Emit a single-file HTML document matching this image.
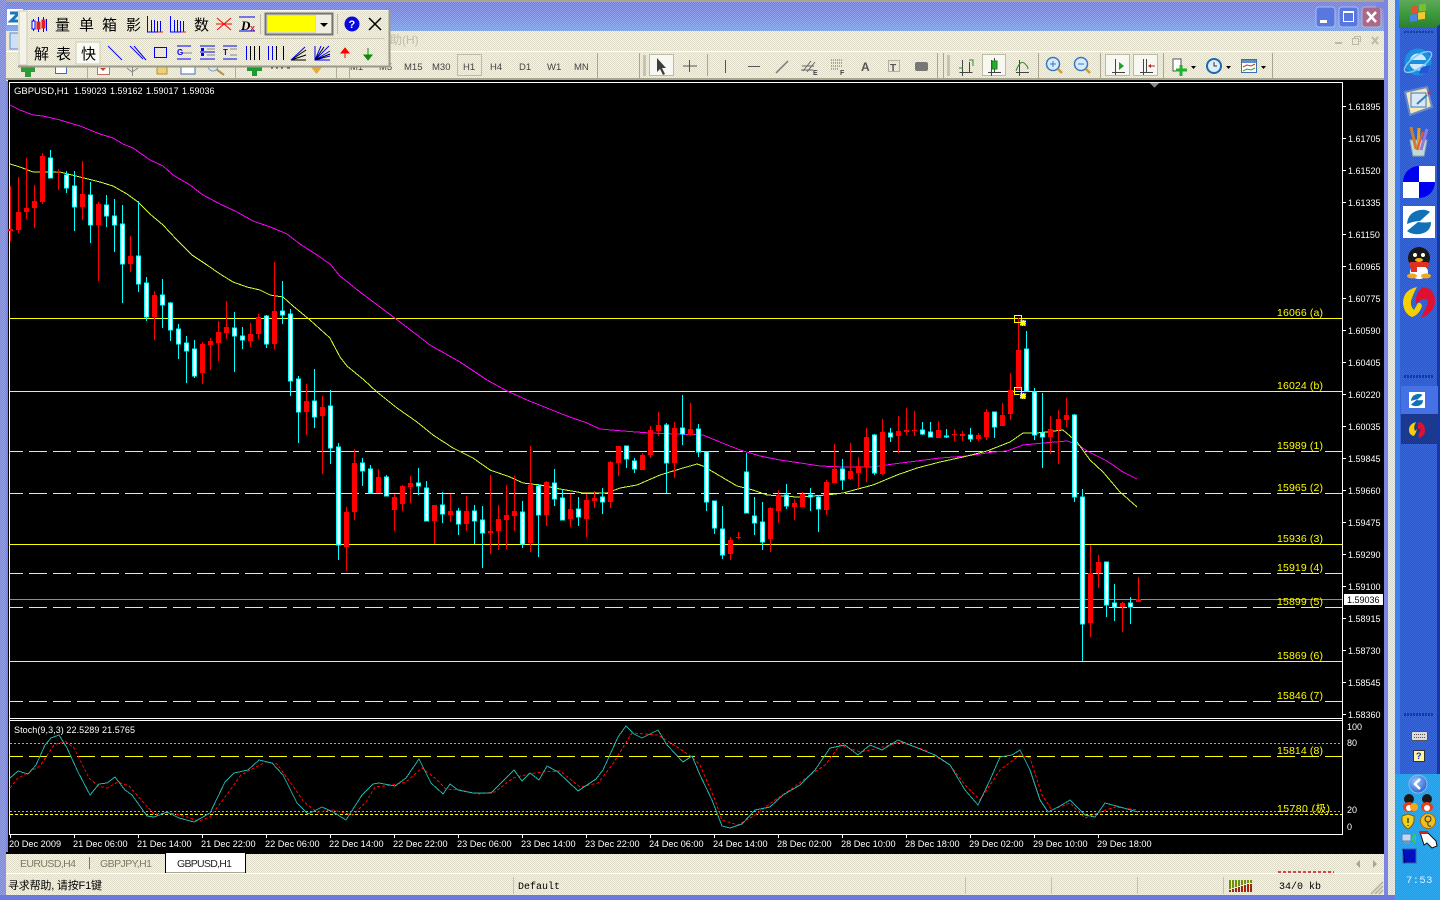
<!DOCTYPE html>
<html lang="zh"><head><meta charset="utf-8"><title>MetaTrader GBPUSD,H1</title>
<style>
html,body{margin:0;padding:0;background:#000;width:1440px;height:900px;overflow:hidden}
svg{display:block;position:absolute;left:0;top:0}
text{font-family:"Liberation Sans","Noto Sans CJK SC",sans-serif}
.ax{fill:#fff;font-size:9px}
.tm{fill:#fff;font-size:9.2px}
.fb{fill:#ff0;font-size:10.5px}
.cjk{font-family:"Liberation Sans","WenQuanYi Zen Hei","Noto Sans CJK SC",sans-serif;font-size:15px;fill:#000}
.tf{font-size:9.5px;fill:#444}
</style></head><body>
<svg width="1440" height="900" viewBox="0 0 1440 900" xmlns="http://www.w3.org/2000/svg">
<defs>
<pattern id="dl" width="2" height="2" patternUnits="userSpaceOnUse"><rect width="1" height="1" fill="#fff" opacity=".22"/><rect x="1" y="1" width="1" height="1" fill="#fff" opacity=".22"/></pattern>
<pattern id="dd" width="2" height="2" patternUnits="userSpaceOnUse"><rect width="1" height="1" fill="#000" opacity=".1"/><rect x="1" y="1" width="1" height="1" fill="#000" opacity=".1"/></pattern>
<pattern id="bg" width="2" height="2" patternUnits="userSpaceOnUse"><rect width="2" height="2" fill="#f5f3e9"/><rect width="1" height="1" fill="#dfdcc9"/><rect x="1" y="1" width="1" height="1" fill="#dfdcc9"/></pattern>
<linearGradient id="tt" x1="0" y1="0" x2="0" y2="1"><stop offset="0" stop-color="#6f78e4"/><stop offset=".5" stop-color="#7288ea"/><stop offset="1" stop-color="#72a0f0"/></linearGradient>
<linearGradient id="st" x1="0" y1="0" x2="0" y2="1"><stop offset="0" stop-color="#5fa85a"/><stop offset=".5" stop-color="#3c9a3c"/><stop offset="1" stop-color="#2c7e32"/></linearGradient>
<radialGradient id="ar" cx=".4" cy=".35" r=".7"><stop offset="0" stop-color="#9cc6f8"/><stop offset="1" stop-color="#2860d0"/></radialGradient>
<g id="zz"><path d="M1407 224Q1408 212 1420 210Q1426 209 1430 212L1420 221Q1414 221 1407 224z" fill="#1070b8"/><path d="M1431 222Q1431 232 1420 234Q1412 235 1407 231L1418 222Q1425 223 1431 222z" fill="#1070b8"/></g>
</defs>

<!-- window frame -->
<rect width="1440" height="900" fill="#7a86e2"/>
<rect x="0" y="0" width="1396" height="31" fill="url(#tt)"/>
<rect x="0" y="0" width="1396" height="31" fill="url(#dl)"/>
<rect x="0" y="0" width="1396" height="2" fill="#a8a68e"/>
<rect x="0" y="0" width="6" height="900" fill="#7a86e2"/><rect x="0" y="0" width="6" height="900" fill="url(#dl)"/>
<rect x="6" y="31" width="1378" height="50" fill="url(#bg)"/>
<rect x="6" y="51" width="1378" height="1" fill="#fff"/>
<rect x="6" y="78" width="1378" height="2" fill="#a8a68e"/>
<rect x="1384" y="0" width="4" height="900" fill="#7a86e2"/>
<rect x="1388" y="0" width="7" height="900" fill="#eeeee8"/>
<rect x="1388" y="0" width="7" height="900" fill="url(#dd)"/>

<!-- title buttons -->
<g>
<rect x="1316" y="7" width="19" height="20" rx="3" fill="#5878e0" stroke="#a8bcf4"/><rect x="1320" y="20" width="7" height="3" fill="#fff"/>
<rect x="1339" y="7" width="19" height="20" rx="3" fill="#5878e0" stroke="#a8bcf4"/><rect x="1343.500" y="11.500" width="10" height="10" fill="none" stroke="#fff"/><rect x="1343" y="11" width="11" height="2" fill="#fff"/>
<rect x="1362" y="7" width="19" height="20" rx="3" fill="#a86a8c" stroke="#c0b0c8"/><path d="M1367 12l9 10M1376 12l-9 10" stroke="#fff" stroke-width="2.500"/>
<rect x="1376" y="2" width="8" height="6" fill="#7a86e2"/>
</g>
<!-- app icon -->
<rect x="7" y="9" width="16" height="16" fill="#fff"/><path d="M10 13h9l-8 8h9" fill="none" stroke="#1878c0" stroke-width="3"/>
<!-- menu fragments -->
<rect x="10" y="33" width="9" height="16" fill="#cfe0f6" stroke="#5a8ad8"/>
<text x="390" y="44" font-size="12" fill="#c0bea8">助(H)</text>
<path d="M1335 43h7" stroke="#bdbba8" stroke-width="2"/><rect x="1354.500" y="36.500" width="6" height="5" fill="none" stroke="#bdbba8"/><rect x="1352.500" y="38.500" width="6" height="6" fill="url(#bg)" stroke="#bdbba8"/><path d="M1372 37l6 7M1378 37l-6 7" stroke="#bdbba8" stroke-width="2"/>

<!-- toolbar row (mostly hidden by the floating bar) -->
<g>
<path d="M25 62h6v5h4v5h-4v5h-6v-5h-4v-5h4z" fill="#2e9a3a"/>
<rect x="55.500" y="64.500" width="11" height="9" fill="#fff" stroke="#3c70b8"/>
<rect x="97.500" y="64.500" width="12" height="10" fill="#fff" stroke="#c07060"/><path d="M100 68l3 3 3-3" fill="#d04020"/>
<path d="M132.500 64v12M127 68l5 4 6-4" stroke="#888" fill="none"/>
<rect x="157" y="65" width="10" height="9" fill="#f0d070" stroke="#b09040"/>
<rect x="181" y="64" width="14" height="10" fill="#fff" stroke="#3c70b8"/>
<path d="M216 69l8 6" stroke="#b09040" stroke-width="2"/><circle cx="213" cy="66" r="5" fill="#dce8f8" stroke="#8aa0c0"/>
<path d="M247 66h15v5h-5v5h-5v-5h-5z" fill="#1c9c30"/>
<path d="M271 68h2m3 0h2m3 0h2m4 0h3" stroke="#333"/>
<path d="M310 66h13l-6.500 8z" fill="#e8a838"/>
<path d="M87.500 52v26M235.500 52v26M336.500 52v26M349.500 52v26" stroke="#b0ae96"/>
<text class="tf" x="350" y="70">M1</text><text class="tf" x="379" y="70">M5</text>
</g>
<g>
<text class="tf" x="404" y="70">M15</text><text class="tf" x="432" y="70">M30</text>
<rect x="457.500" y="54.500" width="24" height="21" fill="none" stroke="#bdbba4"/>
<text class="tf" x="463" y="70">H1</text><text class="tf" x="490" y="70">H4</text><text class="tf" x="519" y="70">D1</text><text class="tf" x="547" y="70">W1</text><text class="tf" x="574" y="70">MN</text>
</g>
<path d="M597.500 53v25M639.500 53v25M707.500 54v22M937.500 53v25M943.500 53v25M1038.500 53v25M1100.500 53v25M1163.500 53v25M1272.500 53v25" stroke="#a9a792"/>
<rect x="643" y="55" width="3" height="21" fill="#c6c4ac"/><rect x="947" y="55" width="3" height="21" fill="#c6c4ac"/>
<rect x="649.500" y="54.500" width="24" height="21" fill="#f8f8f2" stroke="#bdbba4"/>
<path d="M657 58v14l3-3 3 6 2-1-3-6h4z" fill="#3c3c3c"/>
<path d="M689.500 60v12M683 66h14" stroke="#555"/>
<path d="M725.500 60v13" stroke="#555"/><path d="M748 66.500h12" stroke="#555"/><path d="M776 73l12-12" stroke="#777" stroke-width="1.500"/>
<path d="M803 71l8-10M807 72l8-10M802 66h12M801 70h12" stroke="#666"/><text x="813" y="75" font-size="7" font-weight="bold" fill="#444">E</text>
<path d="M831 60h12M831 63h12M831 66h12M831 69h8" stroke="#666" stroke-dasharray="1 1"/><text x="840" y="75" font-size="7" font-weight="bold" fill="#444">F</text>
<text x="861" y="71" font-size="12" font-weight="bold" fill="#555">A</text>
<rect x="888.500" y="60.500" width="11" height="11" fill="none" stroke="#777" stroke-dasharray="1 1"/><text x="890" y="71" font-size="10" font-weight="bold" fill="#555">T</text>
<rect x="915" y="62" width="13" height="9" rx="2" fill="#777"/>
<!-- chart type icons -->
<g fill="none" stroke="#444">
<path d="M959.500 72.500h13M962.500 60v16M969.500 62v11"/>
<path d="M969 60h4v6M959 68h4" stroke="#2a8a2a"/>
<rect x="982.500" y="54.500" width="23" height="21" fill="#f8f8f2" stroke="#bdbba4"/>
<path d="M988 72.500h13M991.500 60v16M994.500 58v15"/>
<rect x="992" y="61" width="5" height="8" fill="#22b02a" stroke="#1a801a"/>
<path d="M1016 72.500h13M1019.500 60v16"/><path d="M1016 71q4-11 8-8t4 6" stroke="#2a8a2a"/>
</g>
<g>
<circle cx="1053" cy="64" r="6.500" fill="#d8eafc" stroke="#3878c0" stroke-width="1.500"/><path d="M1050 64h6M1053 61v6" stroke="#3878c0"/><path d="M1058 69l4 4" stroke="#c8a030" stroke-width="2.500"/>
<circle cx="1081" cy="64" r="6.500" fill="#d8eafc" stroke="#3878c0" stroke-width="1.500"/><path d="M1078 64h6" stroke="#3878c0"/><path d="M1086 69l4 4" stroke="#c8a030" stroke-width="2.500"/>
<rect x="1105.500" y="54.500" width="24" height="21" fill="#f8f8f2" stroke="#bdbba4"/>
<path d="M1112 72.500h13M1115.500 59v16" stroke="#444"/><path d="M1119 62l5 4-5 4z" fill="#22a02a"/>
<rect x="1133.500" y="54.500" width="24" height="21" fill="#f8f8f2" stroke="#bdbba4"/>
<path d="M1140 72.500h13M1143.500 59v16M1146.500 59v14" stroke="#444"/><path d="M1149 66h6" stroke="#c02020"/><path d="M1148 66l3-2v4z" fill="#c02020"/>
<rect x="1173" y="59" width="8" height="12" fill="#fff" stroke="#555"/><path d="M1176 70h11M1181 65v11" stroke="#22b02a" stroke-width="3"/><path d="M1191 66h5l-2.500 3z" fill="#000"/>
<circle cx="1214" cy="66" r="7" fill="#e0eefc" stroke="#1c6ab0" stroke-width="2"/><path d="M1214 62v4h3" stroke="#333" fill="none"/><path d="M1226 66h5l-2.500 3z" fill="#000"/>
<rect x="1241.500" y="59.500" width="15" height="13" fill="#fff" stroke="#3a70b0"/><rect x="1242" y="60" width="14" height="3" fill="#6090c8"/><path d="M1243 67l4-2 4 1 4-2" stroke="#c04020" fill="none"/><path d="M1243 71l4-2 4 1 4-2" stroke="#30a030" fill="none"/><path d="M1261 66h5l-2.500 3z" fill="#000"/>
</g>

<!-- chart area -->
<rect x="8" y="80" width="1376" height="773" fill="#000"/>
<g shape-rendering="crispEdges">
<path d="M9.500 82v752M1342.500 82v752M9 82.500h1334M9 718.500h1334M9 720.500h1334M9 834.500h1334" stroke="#fff" fill="none"/>
<path d="M1155 83h-5l4.500 5 4.500-5z" fill="#888"/>
<path d="M10 318.500H1342M10 391.500H1342M10 544.500H1342M10 661.500H1342" stroke="#ff0"/>
<path d="M10 451.500H1342M10 493.500H1342M10 573.500H1342M10 607.500H1342M10 701.500H1342M10 756.500H1342" stroke="#ff0" stroke-dasharray="18 6" stroke-dashoffset="5"/>
<path d="M10 599.500H1342" stroke="#8a8aa8"/>
<path d="M10 743.500H1342M10 811.500H1342" stroke="#aaa" stroke-dasharray="2 2"/>
<path d="M10 814.500H1342" stroke="#ff0" stroke-dasharray="3 2"/>
<!-- moving averages -->
<polyline fill="none" stroke="#f0f" points="10,105 20,110 33,115 43,116 60,120 80,126 100,134 113,138 123,144 133,148 150,160 163,166 173,175 190,185 203,195 220,204 237,212 253,221 273,228 287,234 300,244 317,255 330,264 340,276 360,292 400,322 430,345 460,362 487,380 507,391 527,400 547,408 567,416 587,423 600,429 623,431 650,433 703,435 720,442 740,450 760,456 780,460 807,464 820,466 843,467 873,467 893,464 917,461 940,458 967,456 993,452 1007,451 1023,445 1043,443 1067,441 1077,444 1087,451 1107,461 1123,472 1137,479"/>
<polyline fill="none" stroke="#ccff33" points="10,164 20,167 33,172 43,172 60,172 80,177 100,182 113,186 127,194 138,202 150,214 163,225 177,240 192,255 207,265 220,274 233,282 247,287 260,290 270,295 283,297 293,306 310,320 330,338 340,357 347,366 364,380 377,392 397,408 417,422 433,435 453,448 473,458 490,470 510,477 523,483 540,485 560,489 583,493 607,493 620,488 637,485 660,475 683,468 697,464 703,466 720,476 737,486 753,490 767,495 797,497 827,495 843,493 873,485 897,475 917,468 940,462 963,457 987,451 1010,442 1023,433 1037,433 1063,430 1077,442 1090,460 1103,472 1120,492 1137,507"/>
<!-- red wicks -->
<path stroke="#f00" fill="none" d="M10.500 186V241M18.500 177V233M26.500 158V219M34.500 185V228M42.500 153V204M58.500 169V190M82.500 161V220M98.500 202V281M130.500 236V272M154.500 291V340M202.500 342V384M210.500 338V370M218.500 321V361M226.500 301V339M250.500 323V347M258.500 314V339M274.500 262V349M306.500 384V435M322.500 396V474M346.500 507V571M354.500 449V520M378.500 469V493M394.500 494V531M402.500 485V511M410.500 476V503M434.500 505V544M450.500 494V522M466.500 496V531M490.500 475V554M498.500 505V550M506.500 485V549M514.500 476V531M530.500 446V552M546.500 481V526M570.500 494V527M586.500 494V537M594.500 491V508M610.500 461V508M618.500 446V476M642.500 453V470M650.500 426V458M658.500 412V436M674.500 422V478M690.500 403V436M730.500 537V560M738.500 532V539M770.500 507V552M778.500 490V523M794.500 499V520M802.500 492V507M826.500 480V515M834.500 444V483M850.500 443V480M858.500 457V488M866.500 428V482M882.500 419V475M898.500 416V453M906.500 408V435M914.500 411V436M938.500 421V438M954.500 429V441M962.500 431V441M978.500 433V441M986.500 409V440M1002.500 403V426M1010.500 373V420M1018.500 318V390M1050.500 416V454M1058.500 410V464M1066.500 398V427M1090.500 545V637M1098.500 555V588M1122.500 602V632M1138.500 577V602"/>
<!-- red bodies -->
<path stroke="#f00" stroke-width="5" fill="none" d="M10.500 229V231M18.500 212V230M26.500 208V212M34.500 201V208M42.500 156V202M58.500 171V172M82.500 194V207M98.500 204V225M130.500 256V264M154.500 295V317M202.500 344V373M210.500 341V345M218.500 332V343M226.500 327V333M250.500 334V341M258.500 317V334M274.500 311V344M306.500 401V412M322.500 407V416M346.500 512V547M354.500 463V512M378.500 477V493M394.500 497V510M402.500 486V504M410.500 483V487M434.500 505V521M450.500 511V515M466.500 511V524M490.500 531V533M498.500 519V531M506.500 515V520M514.500 511V516M530.500 485V543M546.500 482V515M570.500 509V519M586.500 500V519M594.500 498V501M610.500 462V502M618.500 446V463M642.500 455V470M650.500 430V455M658.500 425V431M674.500 428V463M690.500 429V435M730.500 540V554M738.500 537V538M770.500 508V539M778.500 495V511M794.500 503V507M802.500 494V507M826.500 482V510M834.500 469V483M850.500 471V479M858.500 466V473M866.500 437V467M882.500 432V474M898.500 431V436M906.500 430V432M914.500 430V431M938.500 430V438M954.500 434V435M962.500 434V436M978.500 435V439M986.500 412V437M1002.500 415V426M1010.500 390V414M1018.500 350V390M1050.500 429V437M1058.500 419V430M1066.500 415V420M1090.500 573V623M1098.500 562V573M1122.500 603V607M1138.500 599V602"/>
<!-- cyan wicks -->
<path stroke="#0ff" fill="none" d="M50.500 150V178M66.500 171V193M74.500 171V231M90.500 182V243M106.500 195V227M114.500 199V252M122.500 205V303M138.500 201V292M146.500 277V321M162.500 279V328M170.500 302V341M178.500 324V359M186.500 336V383M194.500 340V378M234.500 312V372M242.500 327V349M266.500 315V348M282.500 281V324M290.500 309V396M298.500 376V443M314.500 369V428M330.500 390V464M338.500 443V560M362.500 458V486M370.500 465V493M386.500 475V496M418.500 468V495M426.500 481V521M442.500 492V523M458.500 508V535M474.500 505V544M482.500 506V568M522.500 501V548M538.500 484V557M554.500 469V506M562.500 489V520M578.500 497V526M602.500 488V514M626.500 446V468M634.500 458V473M666.500 423V493M682.500 395V445M698.500 424V457M706.500 452V511M714.500 501V534M722.500 506V559M746.500 453V513M754.500 497V535M762.500 502V550M786.500 484V509M810.500 488V511M818.500 495V532M842.500 459V490M874.500 434V475M890.500 428V442M922.500 422V435M930.500 422V437M946.500 429V438M970.500 428V442M994.500 412V438M1026.500 331V391M1034.500 388V440M1042.500 393V468M1074.500 414V502M1082.500 489V661M1106.500 562V617M1114.500 584V621M1130.500 597V624"/>
<!-- cyan bodies -->
<path stroke="#0ff" fill="#fff" d="M48.500 158h4V178h-4zM64.500 175h4V188h-4zM72.500 186h4V207h-4zM88.500 195h4V225h-4zM104.500 205h4V216h-4zM112.500 216h4V225h-4zM120.500 224h4V264h-4zM136.500 256h4V284h-4zM144.500 283h4V317h-4zM160.500 295h4V305h-4zM168.500 303h4V330h-4zM176.500 329h4V344h-4zM184.500 343h4V351h-4zM192.500 349h4V376h-4zM232.500 328h4V336h-4zM240.500 336h4V340h-4zM264.500 316h4V344h-4zM280.500 311h4V315h-4zM288.500 314h4V381h-4zM296.500 379h4V412h-4zM312.500 401h4V417h-4zM328.500 406h4V448h-4zM336.500 447h4V545h-4zM360.500 463h4V471h-4zM368.500 469h4V493h-4zM384.500 477h4V496h-4zM416.500 483h4V486h-4zM424.500 488h4V521h-4zM440.500 505h4V514h-4zM456.500 511h4V524h-4zM472.500 511h4V521h-4zM480.500 520h4V533h-4zM520.500 512h4V544h-4zM536.500 486h4V515h-4zM552.500 483h4V499h-4zM560.500 498h4V520h-4zM576.500 509h4V517h-4zM600.500 497h4V502h-4zM624.500 446h4V459h-4zM632.500 461h4V469h-4zM664.500 425h4V463h-4zM680.500 428h4V434h-4zM696.500 429h4V452h-4zM704.500 452h4V502h-4zM712.500 501h4V528h-4zM720.500 529h4V555h-4zM744.500 472h4V513h-4zM752.500 516h4V523h-4zM760.500 522h4V542h-4zM784.500 495h4V506h-4zM808.500 495h4V497h-4zM816.500 497h4V509h-4zM840.500 469h4V480h-4zM872.500 435h4V473h-4zM888.500 433h4V437h-4zM920.500 430h4V434h-4zM928.500 432h4V437h-4zM944.500 436h4V437h-4zM968.500 435h4V439h-4zM992.500 412h4V427h-4zM1024.500 349h4V391h-4zM1032.500 392h4V435h-4zM1040.500 433h4V437h-4zM1072.500 415h4V497h-4zM1080.500 497h4V624h-4zM1104.500 562h4V605h-4zM1112.500 603h4V607h-4zM1128.500 603h4V607h-4z"/>
<!-- fib markers -->
<rect x="1014.500" y="315.500" width="7" height="7" fill="none" stroke="#ff0"/><rect x="1020" y="320" width="6" height="6" fill="#ff0" stroke="#00f" stroke-dasharray="1 1"/>
<rect x="1014.500" y="387.500" width="7" height="7" fill="none" stroke="#ff0"/><rect x="1020" y="393" width="6" height="6" fill="#ff0" stroke="#00f" stroke-dasharray="1 1"/>
<!-- stoch -->
<polyline fill="none" stroke="#f00" stroke-dasharray="3 2" points="10,788 18,778 28,773 40,766 54,745 65,741 74,748 89,778 98,786 107,788 118,782 129,786 143,802 154,814 170,813 187,817 199,821 210,817 228,793 241,775 254,768 266,762 277,764 290,782 304,802 317,812 333,810 353,815 366,802 375,787 393,785 406,782 422,768 435,778 446,789 460,790 478,794 495,792 513,778 529,774 542,772 560,771 580,787 598,783 612,765 632,733 658,735 674,745 692,757 700,765 715,800 722,820 738,825 755,815 775,800 790,790 810,775 825,765 840,745 860,752 880,748 900,742 925,750 950,765 965,785 980,800 1000,770 1020,755 1030,758 1042,795 1052,810 1070,803 1085,818 1100,812 1115,807 1138,810"/>
<polyline fill="none" stroke="#20b2aa" points="10,778 18,771 28,774 36,765 45,745 51,738 59,735 67,748 78,772 90,795 99,784 107,783 115,777 125,790 132,795 147,816 154,817 167,812 179,818 194,822 210,813 225,782 234,773 248,770 259,760 272,763 283,775 297,803 308,814 322,807 333,812 346,820 362,795 373,784 379,783 395,786 406,778 419,759 431,783 443,794 450,784 458,790 473,793 491,793 514,770 522,781 530,773 539,780 547,766 558,772 578,791 596,779 603,770 618,737 626,726 634,734 642,738 658,730 667,745 683,762 692,756 700,775 712,800 722,826 730,828 742,824 755,810 770,807 783,795 800,785 815,770 830,748 845,745 858,755 870,745 882,750 898,740 915,747 935,755 950,765 965,790 978,805 990,780 1000,757 1012,755 1020,750 1030,770 1040,800 1048,812 1060,806 1070,800 1085,815 1095,817 1105,803 1120,807 1138,812"/>
<!-- axis ticks -->
<path stroke="#fff" d="M1343 106.500h3M1343 138.500h3M1343 170.500h3M1343 202.500h3M1343 234.500h3M1343 266.500h3M1343 298.500h3M1343 330.500h3M1343 362.500h3M1343 394.500h3M1343 426.500h3M1343 458.500h3M1343 490.500h3M1343 522.500h3M1343 554.500h3M1343 586.500h3M1343 618.500h3M1343 650.500h3M1343 682.500h3M1343 714.500h3M10.500 834v4M74.500 834v4M138.500 834v4M202.500 834v4M266.500 834v4M330.500 834v4M394.500 834v4M458.500 834v4M522.500 834v4M586.500 834v4M650.500 834v4M714.500 834v4M778.500 834v4M842.500 834v4M906.500 834v4M970.500 834v4M1034.500 834v4M1098.500 834v4"/>
<rect x="1344" y="594" width="39" height="11" fill="#fff"/>
</g>

<!-- chart text -->
<text x="14" y="94" class="ax" style="font-size:9.5px">GBPUSD,H1</text>
<text x="74" y="94" class="ax">1.59023</text><text x="110" y="94" class="ax">1.59162</text><text x="146" y="94" class="ax">1.59017</text><text x="182" y="94" class="ax">1.59036</text>
<text x="14" y="733" class="ax" textLength="121">Stoch(9,3,3) 22.5289 21.5765</text>
<g>
<text class="ax" x="1348" y="110">1.61895</text><text class="ax" x="1348" y="142">1.61705</text><text class="ax" x="1348" y="174">1.61520</text><text class="ax" x="1348" y="206">1.61335</text><text class="ax" x="1348" y="238">1.61150</text><text class="ax" x="1348" y="270">1.60965</text><text class="ax" x="1348" y="302">1.60775</text><text class="ax" x="1348" y="334">1.60590</text><text class="ax" x="1348" y="366">1.60405</text><text class="ax" x="1348" y="398">1.60220</text><text class="ax" x="1348" y="430">1.60035</text><text class="ax" x="1348" y="462">1.59845</text><text class="ax" x="1348" y="494">1.59660</text><text class="ax" x="1348" y="526">1.59475</text><text class="ax" x="1348" y="558">1.59290</text><text class="ax" x="1348" y="590">1.59100</text><text class="ax" x="1348" y="622">1.58915</text><text class="ax" x="1348" y="654">1.58730</text><text class="ax" x="1348" y="686">1.58545</text><text class="ax" x="1348" y="718">1.58360</text>
<text x="1347" y="603" style="font-size:9px;fill:#000">1.59036</text>
<text class="ax" x="1347" y="730">100</text><text class="ax" x="1347" y="746">80</text><text class="ax" x="1347" y="813">20</text><text class="ax" x="1347" y="830">0</text>
</g>
<g>
<text class="fb" x="1277" y="316" textLength="46">16066 (a)</text><text class="fb" x="1277" y="389" textLength="46">16024 (b)</text><text class="fb" x="1277" y="449" textLength="46">15989 (1)</text><text class="fb" x="1277" y="491" textLength="46">15965 (2)</text><text class="fb" x="1277" y="542" textLength="46">15936 (3)</text><text class="fb" x="1277" y="571" textLength="46">15919 (4)</text><text class="fb" x="1277" y="605" textLength="46">15899 (5)</text><text class="fb" x="1277" y="659" textLength="46">15869 (6)</text><text class="fb" x="1277" y="699" textLength="46">15846 (7)</text><text class="fb" x="1277" y="754" textLength="46">15814 (8)</text><text class="fb" x="1277" y="812" textLength="53">15780 (极)</text>
</g>
<g>
<text class="tm" x="9" y="847">20 Dec 2009</text><text class="tm" x="73" y="847">21 Dec 06:00</text><text class="tm" x="137" y="847">21 Dec 14:00</text><text class="tm" x="201" y="847">21 Dec 22:00</text><text class="tm" x="265" y="847">22 Dec 06:00</text><text class="tm" x="329" y="847">22 Dec 14:00</text><text class="tm" x="393" y="847">22 Dec 22:00</text><text class="tm" x="457" y="847">23 Dec 06:00</text><text class="tm" x="521" y="847">23 Dec 14:00</text><text class="tm" x="585" y="847">23 Dec 22:00</text><text class="tm" x="649" y="847">24 Dec 06:00</text><text class="tm" x="713" y="847">24 Dec 14:00</text><text class="tm" x="777" y="847">28 Dec 02:00</text><text class="tm" x="841" y="847">28 Dec 10:00</text><text class="tm" x="905" y="847">28 Dec 18:00</text><text class="tm" x="969" y="847">29 Dec 02:00</text><text class="tm" x="1033" y="847">29 Dec 10:00</text><text class="tm" x="1097" y="847">29 Dec 18:00</text>
</g>

<!-- tabs + status -->
<rect x="6" y="853" width="1378" height="20" fill="url(#bg)"/>
<rect x="6" y="852" width="1378" height="2" fill="#000"/>
<rect x="166" y="853" width="79" height="20" fill="#fff"/><path d="M165.500 853v20M245.500 853v20" stroke="#000"/><rect x="166" y="872" width="79" height="1" fill="#a8a68e"/>
<path d="M89.500 857v12" stroke="#777"/>
<text x="20" y="867" font-size="10.500" fill="#7d7b5e" textLength="56">EURUSD,H4</text>
<text x="100" y="867" font-size="10.500" fill="#7d7b5e" textLength="52">GBPJPY,H1</text>
<text x="177" y="867" font-size="10.500" fill="#222" textLength="55">GBPUSD,H1</text>
<path d="M1360 860v8l-4-4z" fill="#a8a68e"/><path d="M1373 860v8l4-4z" fill="#a8a68e"/>
<rect x="6" y="873" width="1378" height="22" fill="url(#bg)"/>
<rect x="6" y="873" width="1378" height="1" fill="#fff"/>
<path d="M513.500 877v17M965.500 877v17M1051.500 877v17M1137.500 877v17M1223.500 877v17" stroke="#c4c2a4"/>
<text x="8" y="889" font-size="11" fill="#000" textLength="94">寻求帮助, 请按F1键</text>
<text x="518" y="889" font-size="10" fill="#000" style="font-family:'Liberation Mono',monospace">Default</text>
<text x="1279" y="889" font-size="10" fill="#000" style="font-family:'Liberation Mono',monospace">34/0 kb</text>
<g shape-rendering="crispEdges">
<path d="M1229 880h2v9h-2zM1232 880h2v8h-2zM1235 880h2v7h-2zM1238 880h2v6h-2zM1241 880h2v5h-2zM1244 880h2v4h-2zM1247 880h2v3h-2zM1250 880h2v3h-2z" fill="#70900c"/>
<path d="M1229 890h2v2h-2zM1232 889h2v3h-2zM1235 888h2v4h-2zM1238 887h2v5h-2zM1241 886h2v6h-2zM1244 885h2v7h-2zM1247 884h2v8h-2zM1250 884h2v8h-2z" fill="#a02808"/>
</g>
<path d="M1371 894l12-12M1375 894l8-8M1379 894l4-4" stroke="#b0ae96" stroke-width="1.500"/>
<rect x="0" y="895" width="1396" height="5" fill="#6c78dc"/>
<path d="M1278 872h56" stroke="#e04040" stroke-width="2" stroke-dasharray="3 2"/>

<!-- floating toolbar -->
<g>
<rect x="18" y="10" width="372" height="57" fill="url(#bg)"/>
<path d="M18.500 10.500h371v56h-371z" fill="none" stroke="#fff" opacity=".5"/>
<path d="M389.500 10v57M18 66.500h372" stroke="#9a9a8a" stroke-width="2"/>
<rect x="19" y="11" width="8" height="54" fill="#f4f3ea" stroke="#cdcbb4"/>
<path d="M30 38.500h355" stroke="#cdcbb4"/>
<path d="M337.500 14v20M260.500 14v20" stroke="#bdbba4"/>
<!-- row 1 -->
<g stroke-width="1" fill="none">
<path d="M33.500 19v12M38.500 17v15M43.500 17v15M46.500 19v12" stroke="#00f"/><rect x="32" y="21" width="3" height="8" fill="#fff" stroke="#00f"/><rect x="37" y="22" width="3" height="7" fill="#e02020" stroke="#e02020"/><rect x="42" y="20" width="3" height="8" fill="#e02020" stroke="#e02020"/>
</g>
<text class="cjk" x="55" y="30">量</text><text class="cjk" x="79" y="30">单</text><text class="cjk" x="102" y="30">箱</text><text class="cjk" x="126" y="30">影</text>
<text class="cjk" x="194" y="30">数</text>
<path d="M147.500 16v16h15M151.500 20v12M154.500 20v12M157.500 21v11M160.500 21v11" stroke="#00f" stroke-width="1" fill="none"/><path d="M158 32h5" stroke="#e02020"/>
<path d="M170.500 16v16h15M174.500 20v12M177.500 20v12M180.500 21v11M183.500 21v11" stroke="#00f" stroke-width="1" fill="none"/><path d="M181 32h5" stroke="#e02020"/>
<path d="M217 18l14 12M231 18l-14 12M216 24h16" stroke="#f00"/>
<text x="241" y="30" font-size="13" font-weight="bold" font-style="italic" fill="#000" style="font-family:'Liberation Serif',serif">D</text><text x="250" y="31" font-size="9" font-weight="bold" fill="#e02020">x</text>
<path d="M239 17h16M239 31h16" stroke="#00f"/>
<rect x="265.500" y="13.500" width="67" height="21" fill="#d8d6c4" stroke="#777" stroke-width="2"/>
<rect x="268" y="16" width="47" height="16" fill="#ff0"/>
<rect x="316" y="15" width="15" height="18" fill="#f0eee0"/>
<path d="M320 23h8l-4 4z" fill="#000"/>
<circle cx="352" cy="24" r="7.500" fill="#0808e0"/><text x="348.500" y="28" font-size="11" font-weight="bold" fill="#fff">?</text>
<path d="M369 18l12 12M381 18l-12 12" stroke="#000" stroke-width="1.500"/>
<!-- row 2 -->
<rect x="76" y="42" width="24" height="22" fill="#fafaf4" stroke="#cdcbb4"/>
<text class="cjk" x="34" y="59">解</text><text class="cjk" x="56" y="59">表</text><text class="cjk" x="81" y="59">快</text>
<path d="M108 46l14 14M130 46l13 13M134 46l12 14" stroke="#00f" stroke-width="1" fill="none"/>
<rect x="154.500" y="47.500" width="12" height="10" fill="none" stroke="#00f"/>
<path d="M177 46h14M177 59h14M185 53h6M200 46h15M200 52h15M200 59h15M223 46h14M223 59h14" stroke="#00f"/><path d="M182 53h10M207 49h8M207 55h8M230 49h7M230 55h7" stroke="#888"/><text x="177" y="55" font-size="8" font-weight="bold" fill="#00f">G</text><text x="223" y="55" font-size="8" font-weight="bold" fill="#00f">T</text><rect x="201" y="48" width="3" height="3" fill="#00f"/><rect x="201" y="53" width="3" height="3" fill="#00f"/>
<path d="M246.500 46v14M250.500 46v14M254.500 46v14M259.500 46v14" stroke="#000"/><path d="M246.500 46v14" stroke="#00f"/>
<path d="M268.500 46v14M272.500 46v14M276.500 46v14M283.500 46v14" stroke="#000"/><path d="M268.500 46v14M272.500 46v14" stroke="#00f"/>
<path d="M291 60l15-10M291 60l15-5M291 60h15" stroke="#000"/><path d="M291 60l14-13" stroke="#00f"/>
<path d="M315 46v14h15M315 60l14-14M315 60l15-9M315 60l15-4M315 60l6-14" stroke="#00f" fill="none"/><path d="M315 60l9-13M315 60l15-6" stroke="#000"/>
<path d="M345 58v-7M341 53l4-5 4 5z" fill="#f00" stroke="#f00"/>
<path d="M368 48v7M364 55l4 5 4-5z" fill="#0a8a0a" stroke="#0a8a0a"/>
</g>

<!-- right taskbar -->
<rect x="1395" y="0" width="45" height="900" fill="#2456d8"/>
<rect x="1395" y="0" width="45" height="900" fill="url(#dl)" opacity=".5"/>
<rect x="1395" y="0" width="5" height="900" fill="#3e80ec"/>
<rect x="1437" y="0" width="3" height="900" fill="#1438a8"/>
<!-- start button -->
<path d="M1399 0H1440V24q-3 4-8 4H1399z" fill="url(#st)"/>
<rect x="1411" y="7" width="7" height="7" fill="#e85030" transform="skewY(-8) translate(0 198)"/>
<rect x="1419" y="6" width="7" height="7" fill="#78c030" transform="skewY(-8) translate(0 198)"/>
<rect x="1410" y="15" width="7" height="7" fill="#4888e0" transform="skewY(-8) translate(0 198)"/>
<rect x="1418" y="14" width="7" height="7" fill="#f8c830" transform="skewY(-8) translate(0 198)"/>
<path d="M1404 32h30" stroke="#16409c" stroke-width="2" stroke-dasharray="2 1"/>
<!-- IE -->
<circle cx="1418" cy="62" r="11" fill="#cfe8fb" stroke="#1a8fe0" stroke-width="5"/>
<rect x="1408" y="60" width="20" height="4" fill="#1a8fe0"/>
<path d="M1421 67l10-2-4 8-8 1z" fill="#2456d8"/>
<ellipse cx="1418" cy="62" rx="16" ry="6" fill="none" stroke="#7cc8f4" stroke-width="1.500" transform="rotate(-35 1418 62)"/>
<!-- notes -->
<path d="M1405 92l22-5 5 20-22 8z" fill="#f4e8b8" stroke="#6888c8" stroke-width="2"/><rect x="1411" y="93" width="15" height="14" fill="#d8e8f8" stroke="#3878c0"/><path d="M1417 104l10-9" stroke="#3878c0" stroke-width="2"/><circle cx="1429" cy="93" r="1.500" fill="#d03030"/>
<!-- pencils -->
<path d="M1410 140l3 16h11l3-16z" fill="#c0d8d8" stroke="#8aa8b0"/>
<path d="M1411 127l5 22" stroke="#c88030" stroke-width="3"/><path d="M1419 128l-1 22" stroke="#e0a020" stroke-width="3"/><path d="M1427 129l-6 21" stroke="#9878d8" stroke-width="3"/><path d="M1423 132l-6 18" stroke="#e06030" stroke-width="2"/>
<!-- checker circle -->
<path d="M1403 182a16 16 0 0 1 16-16v16zM1435 182a16 16 0 0 1-16 16v-16z" fill="#0000f0"/><rect x="1419" y="166" width="16" height="16" fill="#fff"/><rect x="1403" y="182" width="16" height="16" fill="#fff"/>
<!-- Z -->
<rect x="1403" y="206" width="32" height="32" fill="#fff"/>
<use href="#zz" x="0" y="0"/>
<!-- QQ -->
<ellipse cx="1419" cy="258" rx="11" ry="11" fill="#181818"/><ellipse cx="1419" cy="272" rx="9" ry="7" fill="#fff"/>
<rect x="1409" y="262" width="20" height="5" rx="2" fill="#e03020"/><rect x="1411" y="266" width="6" height="6" fill="#e03020"/>
<circle cx="1415" cy="255" r="2" fill="#fff"/><circle cx="1423" cy="255" r="2" fill="#fff"/><ellipse cx="1419" cy="260" rx="4" ry="2" fill="#f0b020"/>
<ellipse cx="1412" cy="276" rx="5" ry="2.500" fill="#f0a820"/><ellipse cx="1426" cy="276" rx="5" ry="2.500" fill="#f0a820"/>
<!-- swirl -->
<path d="M1417 287Q1403 290 1403 303Q1404 314 1412 317Q1419 315 1422 306Q1421 302 1418 303L1414 310Q1409 305 1412 298Q1414 292 1417 287z" fill="#f8d000"/>
<path d="M1422 287Q1435 288 1435 302Q1434 313 1421 318Q1426 308 1428 302Q1426 297 1421 300L1416 304Q1415 296 1419 291z" fill="#e01030"/>
<path d="M1404 376.500h30" stroke="#1438a8" stroke-width="3" stroke-dasharray="2 1"/>
<!-- task buttons -->
<rect x="1401" y="386" width="37" height="28" fill="#4472e4"/><rect x="1409" y="392" width="16" height="16" fill="#fff"/><g transform="translate(1417 400) scale(.5) translate(-1419 -222)"><use href="#zz"/></g>
<rect x="1401" y="414" width="37" height="30" fill="#1a3c9c"/><rect x="1401" y="414" width="37" height="30" fill="url(#dd)"/>
<path d="M1416 422q-7 2-7 8 0 5 5 6 2-3 3-7l-2 2q-2-4 1-9z" fill="#f8d000"/><path d="M1419 422q6 1 6 9 0 5-6 7-1-3 1-7l1-2q-2-1-3 1-1-4 1-8z" fill="#e01030"/>
<!-- lower -->
<path d="M1404 714.500h30" stroke="#1438a8" stroke-width="3" stroke-dasharray="2 1"/>
<rect x="1411.500" y="731.500" width="16" height="9" rx="1" fill="#dcdcdc" stroke="#555"/><path d="M1414 734.500h11M1414 737.500h11" stroke="#555" stroke-dasharray="1 1"/>
<rect x="1413.500" y="750.500" width="11" height="11" fill="#fff4a0" stroke="#333"/><text x="1416" y="759" font-size="9" font-weight="bold" fill="#1030b0">?</text>
<!-- tray -->
<rect x="1395" y="774" width="45" height="126" fill="#16a0ee"/><rect x="1395" y="774" width="45" height="126" fill="url(#dl)" opacity=".5"/>
<circle cx="1418" cy="784" r="9" fill="url(#ar)" stroke="#8ab8ee"/><path d="M1420 779l-5 5 5 5" fill="none" stroke="#fff" stroke-width="2.500"/>
<ellipse cx="1409" cy="799" rx="5" ry="5" fill="#181818"/><ellipse cx="1409" cy="807" rx="6" ry="5" fill="#e04020"/><ellipse cx="1409" cy="808" rx="3" ry="3" fill="#fff"/><circle cx="1414" cy="807" r="4" fill="#f0a820"/>
<ellipse cx="1427" cy="799" rx="5" ry="5" fill="#181818"/><ellipse cx="1427" cy="807" rx="6" ry="5" fill="#e04020"/><ellipse cx="1427" cy="808" rx="3" ry="3" fill="#fff"/>
<path d="M1402 816l6-2 6 2v5q-1 5-6 8-5-3-6-8z" fill="#f0d020" stroke="#806000"/><path d="M1408 818v5M1408 825v1" stroke="#000"/>
<circle cx="1428" cy="821" r="7.500" fill="#f0c020" stroke="#a07000"/><circle cx="1428" cy="819" r="3" fill="none" stroke="#303030"/><path d="M1428 822q-1 5 3 4" fill="none" stroke="#303030"/>
<rect x="1402" y="834" width="9" height="7" fill="#c0d8f0" stroke="#5880c0"/><rect x="1404" y="841" width="6" height="3" fill="#8090a8"/><path d="M1412 836q2 2 0 5M1414 834q3 4 0 9" fill="none" stroke="#30e040"/>
<path d="M1420 832h7l9 9 1 5-5 2-5-5-3 2z" fill="#fff" stroke="#111"/><rect x="1420" y="831" width="8" height="3" fill="#d02020"/>
<rect x="1403" y="849" width="13" height="14" fill="#0010c0" stroke="#3060b0"/><path d="M1403 849l2 14" stroke="#000060"/>
<text x="1406" y="883" font-size="10.500" fill="#d8f0ff" letter-spacing=".4" style="font-family:'Liberation Mono',monospace">7:53</text>
</svg>
</body></html>
